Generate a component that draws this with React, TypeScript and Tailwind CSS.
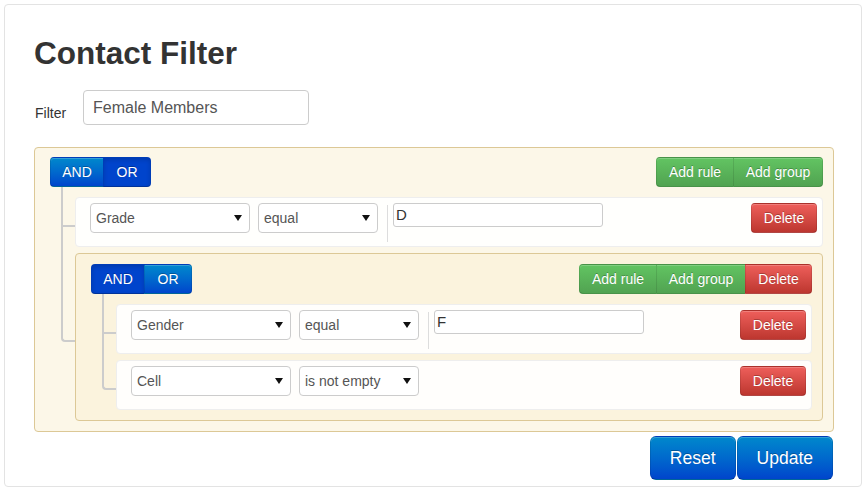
import React from "react";

const btnBase =
  "h-[30px] text-[14px] leading-[20px] text-white border border-[rgba(0,0,0,0.1)] border-b-[rgba(0,0,0,0.25)] [text-shadow:0_-1px_0_rgba(0,0,0,0.25)] flex items-center justify-center";
const blue = "bg-linear-to-b from-[#0088cc] to-[#0044cc] shadow-[inset_0_1px_0_rgba(255,255,255,0.2)]";
const blueActive = "bg-[#0044cc] shadow-[inset_0_2px_4px_rgba(0,0,0,0.15)]";
const green = "bg-linear-to-b from-[#62c462] to-[#51a351] shadow-[inset_0_1px_0_rgba(255,255,255,0.2)]";
const red = "bg-linear-to-b from-[#ee5f5b] to-[#bd362f] shadow-[inset_0_1px_0_rgba(255,255,255,0.2)]";

function Connectors({ first, last }: { first: boolean; last: boolean }) {
  return (
    <>
      <div
        className={`absolute left-[-15px] w-[14px] border-l-2 border-b-2 border-[#ccc] ${
          first ? "top-[-11px] h-[calc(50%+16px)]" : "top-[-7px] h-[calc(50%+12px)]"
        } ${last ? "rounded-bl-[4px]" : ""}`}
      />
      {!last && (
        <div className="absolute left-[-15px] w-[14px] border-l-2 border-[#ccc] top-[calc(50%+3px)] bottom-[-8px]" />
      )}
    </>
  );
}

function Select({ value, width }: { value: string; width: string }) {
  return (
    <div
      className={`${width} h-[30px] border border-[#ccc] rounded-[4px] bg-white flex items-center justify-between pl-[5px] pr-[7px] text-[14px] text-[#555]`}
    >
      <span>{value}</span>
      <span className="w-0 h-0 border-l-[4px] border-r-[4px] border-t-[6px] border-l-transparent border-r-transparent border-t-[#111]" />
    </div>
  );
}

function Rule({
  field,
  op,
  value,
  first,
  last,
}: {
  field: string;
  op: string;
  value?: string;
  first: boolean;
  last: boolean;
}) {
  return (
    <div className="relative h-[50px] border border-[#eee] rounded-[4px] bg-[rgba(255,255,255,0.9)] pt-[5px] pb-[5px] pl-[14px] pr-[5px] flex items-start">
      <Connectors first={first} last={last} />
      <Select value={field} width="w-[160px]" />
      <div className="ml-[8px]">
        <Select value={op} width="w-[120px]" />
      </div>
      {value !== undefined && (
        <div className="ml-[9px] mt-[2px] h-[37px] border-l border-[#ddd] pl-[5px]">
          <div className="-mt-[2px] w-[210px] h-[24px] border border-[#ccc] rounded-[3px] bg-white px-[2px] text-[15px] leading-[22px] text-[#333]">
            {value}
          </div>
        </div>
      )}
      <button className={`${btnBase} ${red} ml-auto w-[66px] rounded-[4px]`}>Delete</button>
    </div>
  );
}

function Group({
  active,
  withDelete,
  children,
  nested,
  first,
  last,
}: {
  active: "AND" | "OR";
  withDelete?: boolean;
  children: React.ReactNode;
  nested?: boolean;
  first?: boolean;
  last?: boolean;
}) {
  return (
    <div
      className={`relative border border-[#dcc896] rounded-[4px] bg-[rgba(250,240,210,0.5)] ${
        nested ? "pt-[10px]" : "pt-[9px]"
      } pb-[10px] pr-[10px]`}
    >
      {nested && <Connectors first={!!first} last={!!last} />}
      <div className="flex justify-between pl-[15px]">
        <div className="flex">
          <button
            className={`${btnBase} ${active === "AND" ? blueActive : blue} w-[54px] rounded-l-[4px]`}
          >
            AND
          </button>
          <button
            className={`${btnBase} ${active === "OR" ? blueActive : blue} w-[48px] rounded-r-[4px] -ml-px`}
          >
            OR
          </button>
        </div>
        <div className="flex">
          <button className={`${btnBase} ${green} w-[78px] rounded-l-[4px]`}>Add rule</button>
          <button
            className={`${btnBase} ${green} w-[90px] -ml-px ${withDelete ? "" : "rounded-r-[4px]"}`}
          >
            Add group
          </button>
          {withDelete && (
            <button className={`${btnBase} ${red} w-[67px] -ml-px rounded-r-[4px]`}>Delete</button>
          )}
        </div>
      </div>
      <div className="mt-[10px] pl-[40px] flex flex-col gap-[6px]">{children}</div>
    </div>
  );
}

export default function App() {
  return (
    <div className="w-[868px] h-[491px] bg-white overflow-hidden font-['Liberation_Sans',Arial,sans-serif] text-[#333]">
      <div className="m-[4px] w-[858px] border border-[#e3e3e3] rounded-[4px] pl-[29px] pr-[28px] pt-[28px] pb-[6px]">
        <h1 className="text-[31.5px] leading-[40px] font-bold text-[#333]">Contact Filter</h1>
        <div className="flex items-start mt-[17px]">
          <div className="w-[49px] mt-[13px] text-[14px] leading-[20px] pl-[1px]">Filter</div>
          <div className="w-[226px] h-[35px] border border-[#ccc] rounded-[4px] px-[9px] flex items-center text-[16px] text-[#555] bg-white">
            Female Members
          </div>
        </div>
        <div className="mt-[22px] mr-[-1px]">
          <Group active="OR">
            <Rule field="Grade" op="equal" value="D" first last={false} />
            <Group active="AND" withDelete nested first={false} last>
              <Rule field="Gender" op="equal" value="F" first last={false} />
              <Rule field="Cell" op="is not empty" first={false} last />
            </Group>
          </Group>
        </div>
        <div className="flex justify-end mt-[4px] gap-[1px]">
          <button
            className={`h-[44px] px-[19px] text-[17.5px] leading-[20px] text-white rounded-[6px] border border-[rgba(0,0,0,0.1)] border-b-[rgba(0,0,0,0.25)] [text-shadow:0_-1px_0_rgba(0,0,0,0.25)] ${blue}`}
          >
            Reset
          </button>
          <button
            className={`h-[44px] px-[19px] text-[17.5px] leading-[20px] text-white rounded-[6px] border border-[rgba(0,0,0,0.1)] border-b-[rgba(0,0,0,0.25)] [text-shadow:0_-1px_0_rgba(0,0,0,0.25)] ${blue}`}
          >
            Update
          </button>
        </div>
      </div>
    </div>
  );
}
